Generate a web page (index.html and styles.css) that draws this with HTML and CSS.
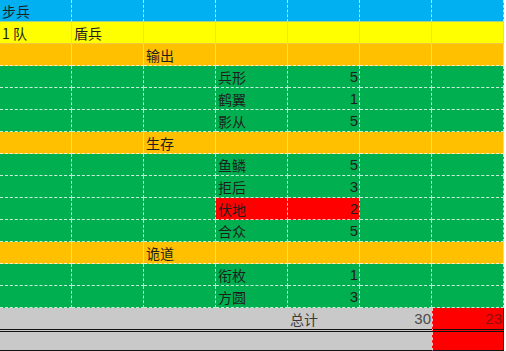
FILE: index.html
```html
<!DOCTYPE html>
<html lang="zh">
<head>
<meta charset="utf-8">
<link rel="stylesheet" href="styles.css">
</head>
<body>
<div class="sheet">
  <div class="row blue"><div class="c">步兵</div><div class="c"></div><div class="c"></div><div class="c"></div><div class="c"></div><div class="c"></div><div class="c"></div></div>
  <div class="row yellow"><div class="c">1 队</div><div class="c">盾兵</div><div class="c"></div><div class="c"></div><div class="c"></div><div class="c"></div><div class="c"></div></div>
  <div class="row orange"><div class="c"></div><div class="c"></div><div class="c">输出</div><div class="c"></div><div class="c"></div><div class="c"></div><div class="c"></div></div>
  <div class="row green"><div class="c"></div><div class="c"></div><div class="c"></div><div class="c">兵形</div><div class="c num">5</div><div class="c"></div><div class="c"></div></div>
  <div class="row green"><div class="c"></div><div class="c"></div><div class="c"></div><div class="c">鹤翼</div><div class="c num">1</div><div class="c"></div><div class="c"></div></div>
  <div class="row green"><div class="c"></div><div class="c"></div><div class="c"></div><div class="c">影从</div><div class="c num">5</div><div class="c"></div><div class="c"></div></div>
  <div class="row orange"><div class="c"></div><div class="c"></div><div class="c">生存</div><div class="c"></div><div class="c"></div><div class="c"></div><div class="c"></div></div>
  <div class="row green"><div class="c"></div><div class="c"></div><div class="c"></div><div class="c">鱼鳞</div><div class="c num">5</div><div class="c"></div><div class="c"></div></div>
  <div class="row green"><div class="c"></div><div class="c"></div><div class="c"></div><div class="c">拒后</div><div class="c num">3</div><div class="c"></div><div class="c"></div></div>
  <div class="row green"><div class="c"></div><div class="c"></div><div class="c"></div><div class="c red">伏地</div><div class="c num red">2</div><div class="c"></div><div class="c"></div></div>
  <div class="row green"><div class="c"></div><div class="c"></div><div class="c"></div><div class="c">合众</div><div class="c num">5</div><div class="c"></div><div class="c"></div></div>
  <div class="row orange"><div class="c"></div><div class="c"></div><div class="c">诡道</div><div class="c"></div><div class="c"></div><div class="c"></div><div class="c"></div></div>
  <div class="row green"><div class="c"></div><div class="c"></div><div class="c"></div><div class="c">衔枚</div><div class="c num">1</div><div class="c"></div><div class="c"></div></div>
  <div class="row green"><div class="c"></div><div class="c"></div><div class="c"></div><div class="c">方圆</div><div class="c num">3</div><div class="c"></div><div class="c"></div></div>
  <div class="row gray total"><div class="c"></div><div class="c"></div><div class="c"></div><div class="c"></div><div class="c label">总计</div><div class="c num">30</div><div class="c num red">23</div></div>
  <div class="row gray last"><div class="c"></div><div class="c"></div><div class="c"></div><div class="c"></div><div class="c"></div><div class="c"></div><div class="c red"></div></div>
</div>
</body>
</html>
```

FILE: styles.css
```css
html, body {
  margin: 0;
  padding: 0;
  background: #ffffff;
}

.sheet {
  width: 506px;
  font-family: "Noto Sans CJK SC", "Liberation Sans", sans-serif;
  font-size: 14px;
  color: #1e1e1e;
}

.row {
  display: grid;
  grid-template-columns: repeat(7, 72px);
  height: 22px;
}

.c {
  box-sizing: border-box;
  height: 22px;
  line-height: 22px;
  padding: 0 1px 0 2px;
  border-right: 1px dashed rgba(255, 255, 255, 0.75);
  border-bottom: 1px dashed rgba(255, 255, 255, 0.8);
  white-space: nowrap;
  overflow: hidden;
}

.num {
  text-align: right;
  font-family: "Liberation Sans", "Noto Sans CJK SC", sans-serif;
  font-size: 15px;
}

.blue .c { background: #00b0f0; border-bottom: 1px solid #9fd28a; border-right-color: rgba(255,255,255,0.7); }
.yellow .c { background: #ffff00; border-bottom: 1px solid #f2c840; border-right-color: rgba(230,210,150,0.9); border-right-style: solid; }
.orange .c { background: #ffc000; border-bottom: 1px dashed rgba(255,255,255,0.8); border-right: 1px solid rgba(240,220,170,0.9); }
.green .c { background: #00b050; }
.green .c.red { background: #ff0000; }

.gray .c {
  background: #c9c9c9;
  border-right: none;
  border-bottom: none;
  color: #3c3c3c;
}
.gray .c.red {
  background: #ff0000;
  border-left: 1px dashed rgba(255,255,255,0.75);
  border-right: 1px solid #222;
}

.total { height: 24px; }
.total .c {
  height: 24px;
  line-height: 22px;
  border-bottom: 3px double #111;
}
.total .c.num { color: #4a4a4a; }
.total .c.num.red { color: #8a1010; border-bottom: 3px double #111; }

.last { height: 19px; }
.last .c,
.last .c.red {
  height: 19px;
  border-bottom: 1px solid #111;
}

.label { text-align: left; }
```
